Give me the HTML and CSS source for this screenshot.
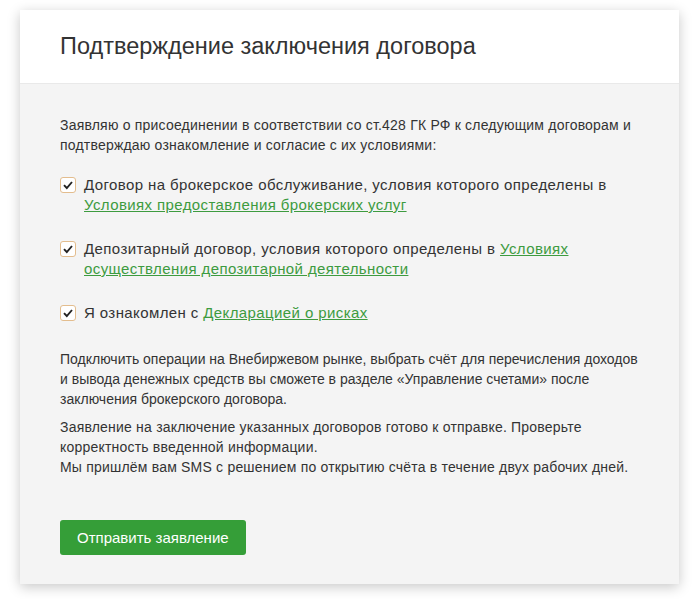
FILE: index.html
```html
<!DOCTYPE html>
<html lang="ru">
<head>
  <meta charset="UTF-8" />
  <title>Подтверждение заключения договора</title>
  <link rel="stylesheet" href="styles.css">
</head>
<body>
  <div class="card">
    <div class="card-head">
      <h1>Подтверждение заключения договора</h1>
    </div>
    <div class="card-body">
      <p class="intro">Заявляю о присоединении в соответствии со ст.428 ГК РФ к следующим договорам и подтверждаю ознакомление и согласие с их условиями:</p>

      <label class="check">
        <span class="box"><svg viewBox="0 0 12 12" width="12" height="12"><path d="M2 6.2 L4.8 9 L10 3" fill="none" stroke="#222" stroke-width="1.9"/></svg></span>
        <span>Договор на брокерское обслуживание, условия которого определены в <a href="#">Условиях предоставления брокерских услуг</a></span>
      </label>

      <label class="check">
        <span class="box"><svg viewBox="0 0 12 12" width="12" height="12"><path d="M2 6.2 L4.8 9 L10 3" fill="none" stroke="#222" stroke-width="1.9"/></svg></span>
        <span>Депозитарный договор, условия которого определены в <a href="#">Условиях осуществления депозитарной деятельности</a></span>
      </label>

      <label class="check">
        <span class="box"><svg viewBox="0 0 12 12" width="12" height="12"><path d="M2 6.2 L4.8 9 L10 3" fill="none" stroke="#222" stroke-width="1.9"/></svg></span>
        <span>Я ознакомлен с <a href="#">Декларацией о рисках</a></span>
      </label>

      <p class="note first">Подключить операции на Внебиржевом рынке, выбрать счёт для перечисления доходов и вывода денежных средств вы сможете в разделе «Управление счетами» после заключения брокерского договора.</p>
      <p class="note">Заявление на заключение указанных договоров готово к отправке. Проверьте корректность введенной информации.<br>Мы пришлём вам SMS с решением по открытию счёта в течение двух рабочих дней.</p>

      <button class="send">Отправить заявление</button>
    </div>
  </div>
</body>
</html>
```

FILE: styles.css
```css
body { margin: 0; background: #fff; font-family: 'Liberation Sans', Arial, sans-serif; color: #333; }
.card { width: 659px; margin: 10px 0 15px 20px; background: #f4f4f4; box-shadow: 0 3px 12px rgba(0,0,0,0.22); }
.card-head { background: #fff; height: 73px; border-bottom: 1px solid #e9e9e9; display: flex; align-items: center; padding: 0 40px; }
.card-head h1 { margin: 0; font-size: 23.5px; font-weight: normal; color: #333; }
.card-body { padding: 31px 40px 29px; font-size: 14px; letter-spacing: 0.2px; line-height: 20px; }
.card-body p { margin: 0; }
.intro { margin-bottom: 20px !important; }
.check { display: flex; align-items: flex-start; gap: 8px; font-size: 15px; letter-spacing: 0.4px; line-height: 20px; margin-bottom: 24px; }
.box { flex: none; width: 14px; height: 14px; margin-top: 2px; border: 1px solid #e3bd8e; border-radius: 3px; background: #fff; display: flex; align-items: center; justify-content: center; }
.check a { color: #3d9b3f; text-decoration: underline; }
.note { margin-bottom: 8px !important; }
.note.first { margin-top: 26px; letter-spacing: 0; }
.send { margin-top: 35px; background: #359e38; color: #fff; border: none; border-radius: 3px; height: 35px; padding: 0 17px; font-family: 'Liberation Sans', Arial, sans-serif; font-size: 15px; letter-spacing: 0; cursor: pointer; }
```
